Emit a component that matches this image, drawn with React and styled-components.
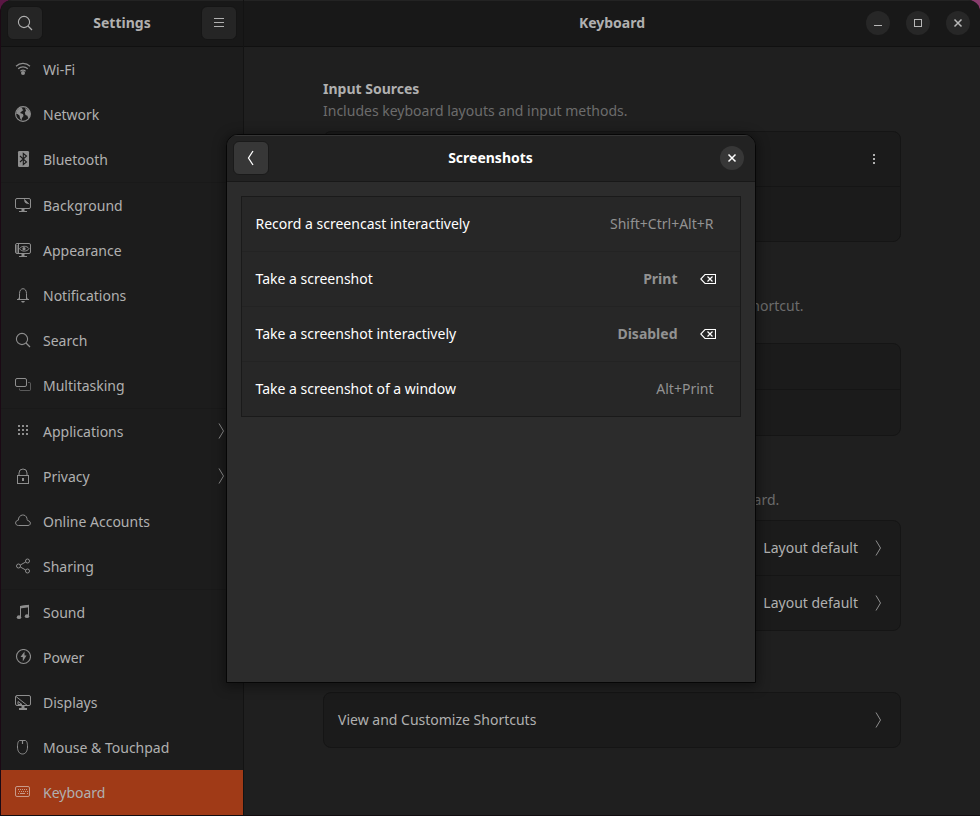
import React from "react";
import styled, { createGlobalStyle, css } from "styled-components";

const Global = createGlobalStyle`
  * { box-sizing: border-box; }
  body { margin: 0; background: #2a0a20; }
  body, button { font-family: "Noto Sans", "Open Sans", sans-serif; font-size: 14px; line-height: 20px; }
  button { border: 0; padding: 0; margin: 0; background: none; color: inherit; }
  h1, h2, p, ul { margin: 0; padding: 0; font-size: inherit; list-style: none; }
`;

const Desktop = styled.div`
  background: linear-gradient(90deg, #5a1744, #8a3d6e);
`;

const Window = styled.div`
  position: relative;
  display: grid;
  grid-template-columns: 243px minmax(0, 1fr);
  min-height: 100vh;
  background: #1f1f1f;
  border-left: 1px solid #1b0914;
  border-bottom: 1px solid #120d10;
  border-radius: 12px 12px 0 0;
  overflow: hidden;
  color: #b0b0b0;
`;

const Sidebar = styled.aside`
  background: #1c1c1c;
  border-right: 1px solid #131313;
`;

const Header = styled.header`
  display: grid;
  grid-template-columns: 1fr auto 1fr;
  align-items: center;
  height: 47px;
  padding: 0 6px;
  background: #181818;
  border-bottom: 1px solid #101010;
  box-shadow: inset 0 1px #232323;
`;

const Title = styled.h1`
  grid-column: 2;
  font-weight: 700;
`;

const HeaderEnd = styled.div`
  display: flex;
  justify-content: flex-end;
  gap: 16px;
  padding-right: ${(p) => p.$inset || "0"};
`;

const HeaderButton = styled.button`
  display: grid;
  place-items: center;
  width: 36px;
  height: 34px;
  border-radius: 6px;
  border: 1px solid ${(p) => (p.$raised ? "#1a1a1a" : "#151515")};
  background: ${(p) => (p.$raised ? "#373737" : "#252525")};
`;

const RoundButton = styled.button`
  display: grid;
  place-items: center;
  width: 24px;
  height: 24px;
  border-radius: 50%;
  background: ${(p) => (p.$raised ? "#373737" : "#272727")};
`;

const NavGroup = styled.ul`
  & + & { border-top: 1px solid #191919; }
`;

const NavButton = styled.button`
  display: flex;
  align-items: center;
  gap: 12px;
  width: 100%;
  height: 45px;
  padding: 0 14px;
  text-align: left;
  ${(p) => p.$active && css`background: #a03a17;`}
  & > svg { margin-bottom: 1px; }
`;

const NavLabel = styled.span`
  flex: 1;
`;

const Icon = styled.svg`
  display: block;
  flex: none;
  width: 16px;
  height: 16px;
  fill: none;
  stroke: currentColor;
  color: ${(p) => p.$color || "#8e8e8e"};
`;

const Content = styled.main`
  max-width: 578px;
  margin: 0 auto;
  padding-top: 30px;
`;

const Section = styled.section`
  margin-bottom: ${(p) => (p.$spaced ? "53px" : "30px")};
`;

const Heading = styled.h2`
  font-weight: 700;
  line-height: 23px;
`;

const Description = styled.p`
  color: #6c6c6c;
  line-height: 22px;
  min-height: ${(p) => (p.$tall ? "39px" : "22px")};
`;

const Card = styled.ul`
  margin-top: ${(p) => (p.$close ? "8px" : "9px")};
  border: 1px solid #151515;
  border-radius: 8px;
  background: #1b1b1b;
`;

const CardRow = styled.li`
  display: flex;
  align-items: center;
  justify-content: space-between;
  gap: 12px;
  height: ${(p) => (p.$compact ? "46px" : "55px")};
  padding: 0 14px;
  &:first-child { height: ${(p) => (p.$compact ? "45px" : "54px")}; }
  & + & { border-top: 1px solid #151515; }
`;

const RowEnd = styled.span`
  display: flex;
  align-items: center;
  gap: 12px;
`;

const MenuButton = styled.button`
  width: 24px;
  height: 24px;
  display: grid;
  place-items: center;
`;

const Overlay = styled.div`
  position: absolute;
  inset: 0;
  display: grid;
  place-items: center;
  padding-top: 2px;
`;

const Dialog = styled.div`
  width: 530px;
  max-width: 100%;
  min-height: 549px;
  overflow: hidden;
  border: 1px solid #060606;
  border-radius: 12px 12px 0 0;
  background: #2c2c2c;
  color: #fff;
  box-shadow: 0 2px 12px 2px rgba(0, 0, 0, 0.4);
`;

const DialogHeader = styled(Header)`
  background: #222;
  border-bottom-color: #181818;
  box-shadow: inset 0 1px #353535;
`;

const ShortcutList = styled.ul`
  margin: 14px;
  border: 1px solid #1a1a1a;
  background: #272727;
`;

const ShortcutRow = styled.li`
  display: flex;
  align-items: center;
  justify-content: space-between;
  height: 55px;
  padding: 0 14px;
  &:first-child { height: 54px; }
  & + & { border-top: 1px solid #232323; }
`;

const Accelerator = styled.span`
  display: flex;
  align-items: center;
  gap: 22px;
  padding-right: ${(p) => (p.$custom ? "10px" : "12px")};
  color: #929292;
  font-weight: ${(p) => (p.$custom ? 700 : 400)};
`;

const shapes = {
  search: (
    <>
      <circle cx="7" cy="7" r="5.6" strokeWidth="1.1" />
      <path d="M11 11l4 4" strokeWidth="1.2" />
    </>
  ),
  menu: <path d="M3 3.5h10M3 7.5h10M3 11.5h10" />,
  wifi: (
    <>
      <path d="M1 5.2a10 10 0 0 1 14 0M3.2 7.8a7 7 0 0 1 9.6 0M5.4 10.2a4 4 0 0 1 5.2 0" strokeWidth="1.2" />
      <circle cx="8" cy="12" r="2" fill="currentColor" stroke="none" />
    </>
  ),
  network: (
    <>
      <circle cx="8" cy="8" r="7.4" strokeWidth="1.1" />
      <path d="M2 4.5L5 1.5l2.5.2L7 3l1.500 1-2 1.500L5 7l3 1 .5 2L7 12l-.6 2.500L5 12l-.5-2.500L2.500 8 1.200 8zM10 2l3 1.500L15.300 7l-.5 4-1.600 1.200-.8-2.400L10.500 9l-.7-2.500L11 4.800z" fill="currentColor" stroke="none" />
    </>
  ),
  bluetooth: (
    <>
      <rect x="3" y="0" width="11" height="16" rx="1.2" fill="currentColor" stroke="none" />
      <path d="M5 5l6.5 6L8.300 13.500v-11L11.500 5 5 11" stroke="#1c1c1c" strokeWidth="1.1" />
    </>
  ),
  background: (
    <>
      <rect x=".5" y="1.5" width="15" height="10" rx="1.5" />
      <path d="M6.5 12v2.5h3V12z" fill="currentColor" stroke="none" />
      <path d="M4 14.5h8" />
      <path d="M9 1.5c.6 2-.2 3 1.2 4.2C11.5 7 13 6.5 15 7.5z" fill="currentColor" stroke="none" />
      <path d="M10 2l5 5" stroke="#1c1c1c" strokeWidth=".5" />
    </>
  ),
  appearance: (
    <>
      <rect x=".5" y="1.5" width="15" height="10" rx="1.5" />
      <path d="M3.5 2v10M1 4h2M1 6h2M1 8h2M1 10h2" />
      <path d="M4.5 6.7c2-3.2 7.500-3.200 9.500 0-2 3.200-7.500 3.200-9.500 0z" />
      <circle cx="9" cy="6.7" r="1.6" fill="currentColor" stroke="none" />
      <path d="M6.5 12v2.5h3V12z" fill="currentColor" stroke="none" />
      <path d="M4 14.5h8" />
    </>
  ),
  bell: (
    <>
      <path d="M4.5 12V6.500c0-6.400 7-6.400 7 0V12M4.500 9.500c0 1.500-.8 1.700-1.200 3M11.500 9.500c0 1.500.8 1.700 1.200 3M2 12.500h12" />
      <path d="M6 14h4l-1 1.500H7z" fill="currentColor" stroke="none" />
    </>
  ),
  multitasking: (
    <>
      <rect x=".5" y="1.5" width="11" height="8" rx="1.5" />
      <path d="M13 5.500h1.500q1 0 1 1v6q0 1-1 1h-9q-1 0-1-1V11.500" opacity=".55" />
    </>
  ),
  apps: <path d="M3 3h10M3 7h10M3 11h10" strokeWidth="2" strokeDasharray="2 2" />,
  lock: (
    <>
      <rect x="2.5" y="7.5" width="11" height="8" />
      <path d="M4 7.500V5a4 4 0 0 1 8 0v2.500" />
      <path d="M8 10v3" strokeWidth="2" />
    </>
  ),
  cloud: <path d="M3.500 12.500C-.4 12.500-.2 7.500 3.300 7.200 3.500.8 11 .4 12 5.500c.2 1 0 1.500.6 2C16.300 8 16.200 12.500 13 12.500z" />,
  share: (
    <>
      <circle cx="3.5" cy="8" r="2" />
      <circle cx="12.5" cy="3" r="2" />
      <circle cx="12.5" cy="13" r="2" />
      <path d="M5.300 7l5.400-3M5.300 9l5.400 3" />
    </>
  ),
  music: (
    <>
      <path d="M5.500 13V2.500L13.500 1.500V12" />
      <path d="M5 2l9-1.300v2.600L5 4.600z" fill="currentColor" stroke="none" />
      <ellipse cx="4" cy="13.2" rx="2.2" ry="1.9" fill="currentColor" stroke="none" />
      <ellipse cx="12" cy="12.2" rx="2.2" ry="1.9" fill="currentColor" stroke="none" />
    </>
  ),
  power: (
    <>
      <circle cx="8.5" cy="7.5" r="7" strokeWidth="1.1" />
      <path d="M9.500 2.500L5.500 8h2.300v4.500l3.700-6H9.500z" fill="currentColor" stroke="none" />
    </>
  ),
  displays: (
    <>
      <rect x=".5" y="1.5" width="15" height="10" rx="1.5" />
      <path d="M1 2.500L13 12M3 7.500v3h4zM4.500 12" />
      <path d="M6.500 12v2.500h3V12z" fill="currentColor" stroke="none" />
      <path d="M4 15h8" strokeWidth="2" />
    </>
  ),
  mouse: (
    <>
      <path d="M5 1.500h5c2 0 2.500 3 2.500 6.500S11 15 7.500 15 2.500 11.500 2.500 8 3 1.500 5 1.500z" />
      <path d="M7.500 1.500v3.500" strokeWidth="1.2" />
    </>
  ),
  keyboard: (
    <>
      <rect x=".5" y="2.5" width="14" height="10" rx="1.5" />
      <path d="M3 5.500h10M4 7.500h9" strokeDasharray="1 1" />
      <path d="M3 9.500h1M5 9.500h5M12 9.500h1" />
    </>
  ),
  next: <path d="M6 0.500l4.500 7.500L6 15.500" />,
  back: <path d="M10 1L5.500 8l4.500 7" strokeWidth="1.3" />,
  close: <path d="M4.500 4.500l7 7M11.500 4.500l-7 7" strokeWidth="1.5" />,
  minimize: <path d="M4 10.500h8" />,
  maximize: <rect x="4.5" y="4.5" width="7" height="7" />,
  more: <path d="M8 3v10" strokeWidth="2" strokeDasharray="2 2" />,
  erase: (
    <>
      <path d="M5 3.500h10.500v9H5L.8 8z" strokeWidth="1.1" />
      <path d="M7.500 5.500l5 5M12.500 5.500l-5 5" strokeWidth="1.2" />
    </>
  ),
};

const Glyph = ({ name, color }) => (
  <Icon viewBox="0 0 16 16" $color={color} aria-hidden="true">{shapes[name]}</Icon>
);

const navigation = [
  [["wifi", "Wi-Fi"], ["network", "Network"], ["bluetooth", "Bluetooth"]],
  [["background", "Background"], ["appearance", "Appearance"], ["bell", "Notifications"], ["search", "Search"], ["multitasking", "Multitasking"]],
  [["apps", "Applications", true], ["lock", "Privacy", true], ["cloud", "Online Accounts"], ["share", "Sharing"]],
  [["music", "Sound"], ["power", "Power"], ["displays", "Displays"], ["mouse", "Mouse & Touchpad"], ["keyboard", "Keyboard"]],
];

const shortcuts = [
  { label: "Record a screencast interactively", keys: "Shift+Ctrl+Alt+R" },
  { label: "Take a screenshot", keys: "Print", custom: true },
  { label: "Take a screenshot interactively", keys: "Disabled", custom: true },
  { label: "Take a screenshot of a window", keys: "Alt+Print" },
];

export default function App() {
  return (
    <Desktop>
      <Global />
      <Window>
        <Sidebar>
          <Header>
            <HeaderButton aria-label="Search"><Glyph name="search" color="#b0b0b0" /></HeaderButton>
            <Title>Settings</Title>
            <HeaderEnd>
              <HeaderButton aria-label="Menu"><Glyph name="menu" color="#b0b0b0" /></HeaderButton>
            </HeaderEnd>
          </Header>
          <nav>
            {navigation.map((group) => (
              <NavGroup key={group[0][1]}>
                {group.map(([icon, label, nested]) => (
                  <li key={label}>
                    <NavButton $active={label === "Keyboard"}>
                      <Glyph name={icon} color={label === "Keyboard" ? "#c79a8a" : undefined} />
                      <NavLabel>{label}</NavLabel>
                      {nested && <Glyph name="next" />}
                    </NavButton>
                  </li>
                ))}
              </NavGroup>
            ))}
          </nav>
        </Sidebar>
        <div>
          <Header>
            <Title>Keyboard</Title>
            <HeaderEnd $inset="4px">
              <RoundButton aria-label="Minimize"><Glyph name="minimize" color="#b8b8b8" /></RoundButton>
              <RoundButton aria-label="Maximize"><Glyph name="maximize" color="#b8b8b8" /></RoundButton>
              <RoundButton aria-label="Close"><Glyph name="close" color="#b8b8b8" /></RoundButton>
            </HeaderEnd>
          </Header>
          <Content>
            <Section $spaced>
              <Heading>Input Sources</Heading>
              <Description>Includes keyboard layouts and input methods.</Description>
              <Card>
                <CardRow>
                  <span />
                  <MenuButton aria-label="Input source options"><Glyph name="more" color="#b0b0b0" /></MenuButton>
                </CardRow>
                <CardRow />
              </Card>
            </Section>
            <Section aria-label="Input Source Switching">
              <Description $tall>
                Input sources can be switched using the Super+Space keyboard shortcut.
              </Description>
              <Card>
                <CardRow $compact />
                <CardRow $compact />
              </Card>
            </Section>
            <Section>
              <Heading>Type Special Characters</Heading>
              <Description>Methods for entering symbols and letter variants using the keyboard.</Description>
              <Card>
                <CardRow>
                  <span>Alternate Characters Key</span>
                  <RowEnd>Layout default <Glyph name="next" /></RowEnd>
                </CardRow>
                <CardRow>
                  <span>Compose Key</span>
                  <RowEnd>Layout default <Glyph name="next" /></RowEnd>
                </CardRow>
              </Card>
            </Section>
            <Section>
              <Heading>Keyboard Shortcuts</Heading>
              <Card $close>
                <CardRow>
                  <span>View and Customize Shortcuts</span>
                  <Glyph name="next" />
                </CardRow>
              </Card>
            </Section>
          </Content>
        </div>
        <Overlay>
          <Dialog role="dialog" aria-label="Screenshots">
            <DialogHeader>
              <HeaderButton $raised aria-label="Back"><Glyph name="back" color="#fff" /></HeaderButton>
              <Title as="h2">Screenshots</Title>
              <HeaderEnd $inset="5px">
                <RoundButton $raised aria-label="Close dialog"><Glyph name="close" color="#fff" /></RoundButton>
              </HeaderEnd>
            </DialogHeader>
            <ShortcutList>
              {shortcuts.map(({ label, keys, custom }) => (
                <ShortcutRow key={label}>
                  <span>{label}</span>
                  <Accelerator $custom={custom}>
                    {keys}
                    {custom && <button aria-label={`Reset ${label}`}><Glyph name="erase" color="#fff" /></button>}
                  </Accelerator>
                </ShortcutRow>
              ))}
            </ShortcutList>
          </Dialog>
        </Overlay>
      </Window>
    </Desktop>
  );
}
